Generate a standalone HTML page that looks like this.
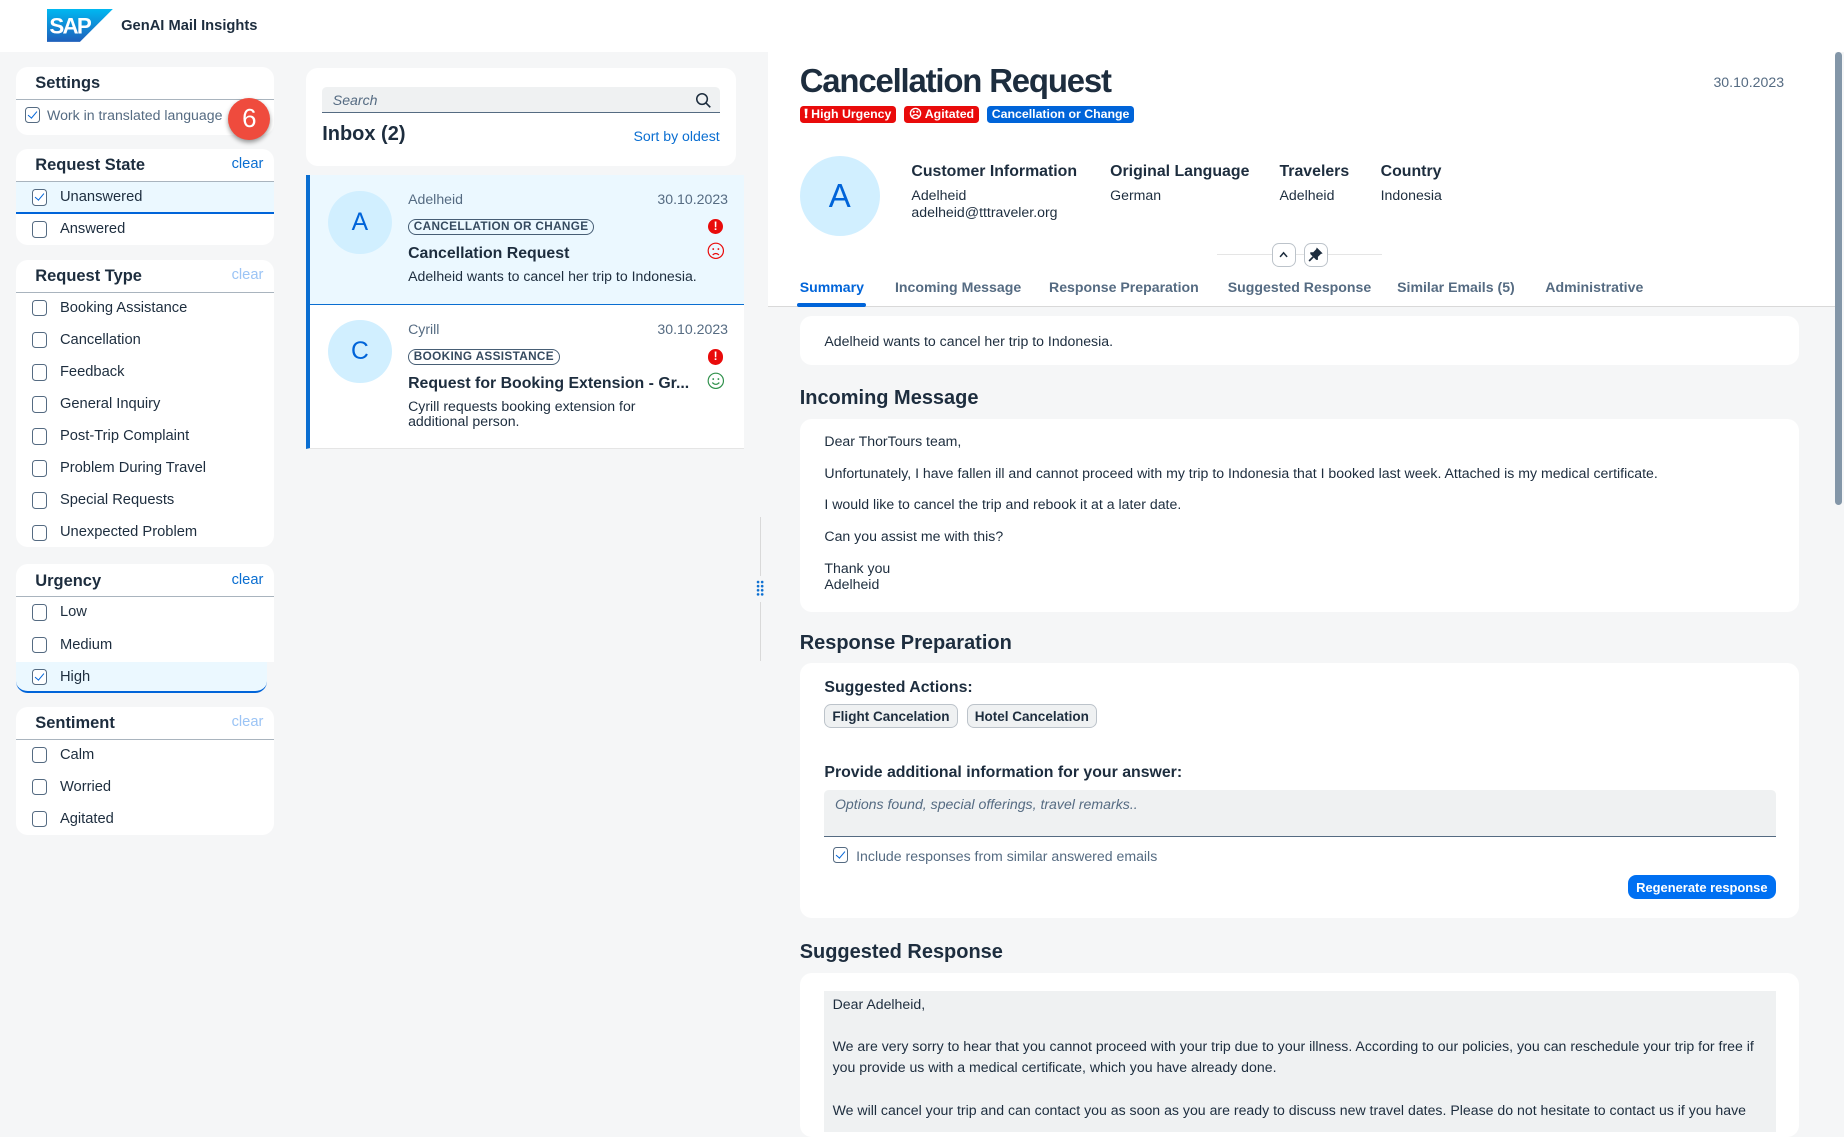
<!DOCTYPE html>
<html><head><meta charset="utf-8">
<style>
html{zoom:1.17602}
*{box-sizing:border-box;margin:0;padding:0}
body{width:1568px;height:955px;overflow:hidden;background:#f5f6f7;font-family:"Liberation Sans",sans-serif;color:#1d2d3e;font-size:12.5px;position:relative}
.a{position:absolute}
.panel{position:absolute;background:#fff;border-radius:10px;overflow:hidden}
.ph{height:28px;border-bottom:1px solid #a9b4be;position:relative}
.ph b{position:absolute;left:16px;top:6px;font-size:14px}
.ph i{position:absolute;right:9px;top:6px;font-style:normal;color:#0a6ed1;font-size:12.5px}
.ph i.d{color:#9bc4f5}
.row{height:27.3px;position:relative;line-height:27px;padding-left:37px}
.cb{position:absolute;left:13px;top:6px;width:13px;height:14px;border:1px solid #556b82;border-radius:3px;background:#fff}
.cb.on::after{content:"";position:absolute;left:3.5px;top:1px;width:3px;height:7px;border:solid #0064d9;border-width:0 1.3px 1.3px 0;transform:rotate(40deg)}
.sel{background:#ebf8ff;border-bottom:2px solid #0064d9}
.tag{display:inline-block;border:1px solid #475e75;border-radius:8px;font-size:10px;font-weight:bold;padding:0 4px;line-height:12px;color:#354a5f;letter-spacing:.3px}
.card{position:absolute;left:680px;width:850px;background:#fff;border-radius:10px}
.h2{position:absolute;left:680px;font-size:17px;font-weight:bold}
.tab{position:absolute;top:237px;font-weight:bold;color:#556b82;font-size:12px}
</style></head><body>
<div class="a" style="left:0;top:0;width:1568px;height:44px;background:#fff"></div>
<svg class="a" style="left:40px;top:8px" width="56" height="28" viewBox="0 0 56 28"><defs><linearGradient id="g" x1="0" y1="0" x2="0" y2="1"><stop offset="0" stop-color="#00b8f1"/><stop offset="1" stop-color="#1e5fbb"/></linearGradient></defs><polygon points="0,0 56,0 28,28 0,28" fill="url(#g)"/><text x="2" y="21" font-family="Liberation Sans" font-weight="bold" font-size="19" fill="#fff" letter-spacing="-1.5">SAP</text></svg>
<div class="a" style="left:103px;top:15px;font-weight:bold;font-size:12.5px">GenAI Mail Insights</div>

<div class="panel" style="left:14px;top:57px;width:219px;height:58px"><div class="ph"><b>Settings</b></div>
<div class="row" style="padding-left:26px;color:#556b82;font-size:12px"><span class="cb on" style="left:7px"></span>Work in translated language</div></div>
<div class="a" style="left:194px;top:83px;width:36px;height:36px;border-radius:50%;background:#ef4b3d;color:#fff;font-size:22px;text-align:center;line-height:36px;box-shadow:0 2px 4px rgba(0,0,0,.4)">6</div>

<div class="panel" style="left:14px;top:127px;width:219px;height:81px"><div class="ph"><b>Request State</b><i>clear</i></div>
<div class="row sel"><span class="cb on"></span>Unanswered</div><div class="row"><span class="cb"></span>Answered</div></div>

<div class="panel" style="left:14px;top:221px;width:219px;height:244px"><div class="ph"><b>Request Type</b><i class="d">clear</i></div>
<div class="row"><span class="cb"></span>Booking Assistance</div><div class="row"><span class="cb"></span>Cancellation</div><div class="row"><span class="cb"></span>Feedback</div><div class="row"><span class="cb"></span>General Inquiry</div><div class="row"><span class="cb"></span>Post-Trip Complaint</div><div class="row"><span class="cb"></span>Problem During Travel</div><div class="row"><span class="cb"></span>Special Requests</div><div class="row"><span class="cb"></span>Unexpected Problem</div></div>

<div class="panel" style="left:14px;top:480px;width:219px;height:110px;background:transparent"><div style="background:#fff"><div class="ph"><b>Urgency</b><i>clear</i></div>
<div class="row"><span class="cb"></span>Low</div><div class="row"><span class="cb"></span>Medium</div></div><div class="row sel" style="height:27px;margin-right:6px;border-radius:0 0 10px 10px"><span class="cb on"></span>High</div></div>

<div class="panel" style="left:14px;top:601px;width:219px;height:109px"><div class="ph"><b>Sentiment</b><i class="d">clear</i></div>
<div class="row"><span class="cb"></span>Calm</div><div class="row"><span class="cb"></span>Worried</div><div class="row"><span class="cb"></span>Agitated</div></div>

<div class="panel" style="left:260px;top:58px;width:366px;height:83px">
<div class="a" style="left:14px;top:16px;width:338px;height:22px;background:#eff1f2;border-bottom:1px solid #556b82;border-radius:4px 4px 0 0;font-style:italic;color:#556b82;padding:4px 9px;font-size:12px">Search</div>
<svg class="a" style="left:331px;top:20px" width="14" height="14" viewBox="0 0 14 14"><circle cx="6" cy="6" r="4.5" fill="none" stroke="#1d2d3e" stroke-width="1.3"/><path d="M9.3 9.3L13 13" stroke="#1d2d3e" stroke-width="1.4"/></svg>
<div class="a" style="left:14px;top:47px;font-size:17px;font-weight:bold">Inbox (2)</div>
<div class="a" style="right:14px;top:51px;color:#0a6ed1;font-size:12px">Sort by oldest</div></div>

<div class="a" style="left:260px;top:149px;width:373px;height:110px;background:#ebf8ff;border-left:4px solid #0a6ed1;border-bottom:1px solid #0a6ed1"></div>
<div class="a" style="left:260px;top:259px;width:373px;height:123px;background:#fff;border-left:4px solid #0a6ed1;border-bottom:1px solid #e5e5e5"></div>
<div class="a" style="left:279px;top:162px;width:54px;height:54px;border-radius:50%;background:#d1efff;color:#0064d9;font-size:21px;text-align:center;line-height:54px">A</div>
<div class="a" style="left:347px;top:162px;color:#556b82;font-size:12px">Adelheid</div>
<div class="a" style="left:559px;top:162px;color:#556b82;font-size:12px">30.10.2023</div>
<div class="a" style="left:347px;top:185px"><span class="tag">CANCELLATION OR CHANGE</span></div>
<div class="a" style="left:602px;top:186px;width:13px;height:13px;border-radius:50%;background:#e90b0b;color:#fff;font-size:10px;font-weight:bold;text-align:center;line-height:13px">!</div>
<svg class="a" style="left:601px;top:206px" width="15" height="15" viewBox="0 0 15 15"><circle cx="7.5" cy="7.5" r="6.5" fill="none" stroke="#e90b0b"/><circle cx="5.3" cy="6" r=".8" fill="#e90b0b"/><circle cx="9.7" cy="6" r=".8" fill="#e90b0b"/><path d="M4.8 11Q7.5 8.5 10.2 11" fill="none" stroke="#e90b0b"/></svg>
<div class="a" style="left:347px;top:208px;font-weight:bold;font-size:13.5px">Cancellation Request</div>
<div class="a" style="left:347px;top:228px;font-size:12px">Adelheid wants to cancel her trip to Indonesia.</div>

<div class="a" style="left:279px;top:272px;width:54px;height:54px;border-radius:50%;background:#d1efff;color:#0064d9;font-size:21px;text-align:center;line-height:54px">C</div>
<div class="a" style="left:347px;top:273px;color:#556b82;font-size:12px">Cyrill</div>
<div class="a" style="left:559px;top:273px;color:#556b82;font-size:12px">30.10.2023</div>
<div class="a" style="left:347px;top:296px"><span class="tag">BOOKING ASSISTANCE</span></div>
<div class="a" style="left:602px;top:297px;width:13px;height:13px;border-radius:50%;background:#e90b0b;color:#fff;font-size:10px;font-weight:bold;text-align:center;line-height:13px">!</div>
<svg class="a" style="left:601px;top:316px" width="15" height="15" viewBox="0 0 15 15"><circle cx="7.5" cy="7.5" r="6.5" fill="none" stroke="#30914c"/><circle cx="5.3" cy="6" r=".8" fill="#30914c"/><circle cx="9.7" cy="6" r=".8" fill="#30914c"/><path d="M4.5 9Q7.5 12 10.5 9" fill="none" stroke="#30914c"/></svg>
<div class="a" style="left:347px;top:319px;font-weight:bold;font-size:13.5px">Request for Booking Extension - Gr...</div>
<div class="a" style="left:347px;top:339px;font-size:12px;line-height:13px">Cyrill requests booking extension for<br>additional person.</div>

<div class="a" style="left:646px;top:440px;width:1px;height:50px;background:#d9d9d9"></div>
<div class="a" style="left:646px;top:512px;width:1px;height:50px;background:#d9d9d9"></div>
<div class="a" style="left:643px;top:493px;width:7px;height:14px;background:radial-gradient(circle,#0a6ed1 1px,transparent 1.3px) 0 0/3.5px 3.5px"></div>

<div class="a" style="left:653px;top:44px;width:907px;height:217px;background:#fff;border-bottom:1px solid #d9d9d9"></div>
<div class="a" style="left:680px;top:53px;font-size:28px;font-weight:bold;letter-spacing:-1px">Cancellation Request</div>
<div class="a" style="left:1457px;top:63px;color:#556b82;font-size:12px">30.10.2023</div>
<div class="a" style="left:680px;top:90px;display:flex;gap:7px;font-size:10.5px;font-weight:bold;color:#fff">
<span style="background:#e90b0b;border-radius:3px;padding:1px 4px">&#10071;&#xFE0E; High Urgency</span>
<span style="background:#e90b0b;border-radius:3px;padding:1px 4px">&#9785; Agitated</span>
<span style="background:#0064d9;border-radius:3px;padding:1px 4px">Cancellation or Change</span></div>
<div class="a" style="left:680px;top:133px;width:68px;height:68px;border-radius:50%;background:#d1efff;color:#0064d9;font-size:28px;text-align:center;line-height:68px">A</div>
<div class="a" style="left:775px;top:139px;line-height:15px"><b style="font-size:13.5px">Customer Information</b><div style="margin-top:4px;font-size:12px">Adelheid<br>adelheid@tttraveler.org</div></div>
<div class="a" style="left:944px;top:139px;line-height:15px"><b style="font-size:13.5px">Original Language</b><div style="margin-top:4px;font-size:12px">German</div></div>
<div class="a" style="left:1088px;top:139px;line-height:15px"><b style="font-size:13.5px">Travelers</b><div style="margin-top:4px;font-size:12px">Adelheid</div></div>
<div class="a" style="left:1174px;top:139px;line-height:15px"><b style="font-size:13.5px">Country</b><div style="margin-top:4px;font-size:12px">Indonesia</div></div>
<div class="a" style="left:1035px;top:216px;width:140px;height:1px;background:#e5e5e5"></div>
<div class="a" style="left:1082px;top:207px;width:20px;height:20px;border-radius:6px;background:#fff;border:1px solid #bcc3ca"><svg width="18" height="18" viewBox="0 0 18 18"><path d="M6 11L9 7.5L12 11" fill="none" stroke="#1d2d3e" stroke-width="1.3"/></svg></div>
<div class="a" style="left:1109px;top:207px;width:20px;height:20px;border-radius:6px;background:#fff;border:1px solid #bcc3ca"><svg width="18" height="18" viewBox="0 0 18 18"><path d="M10 3L15 8L13.5 8.5L11 11L11 13.5L9.5 13.5L4.5 8.5L4.5 7L7 7L9.5 4.5Z" fill="#1d2d3e"/><path d="M7 11L3.5 14.5" stroke="#1d2d3e" stroke-width="1.5"/></svg></div>
<div class="tab" style="left:680px;color:#0064d9">Summary</div>
<div class="a" style="left:678px;top:258px;width:58px;height:3px;background:#0064d9;border-radius:2px"></div>
<div class="tab" style="left:761px">Incoming Message</div>
<div class="tab" style="left:892px">Response Preparation</div>
<div class="tab" style="left:1044px">Suggested Response</div>
<div class="tab" style="left:1188px">Similar Emails (5)</div>
<div class="tab" style="left:1314px">Administrative</div>

<div class="card" style="top:269px;height:41px;padding:14px 21px;font-size:12px">Adelheid wants to cancel her trip to Indonesia.</div>
<div class="h2" style="top:329px">Incoming Message</div>
<div class="card" style="top:356px;height:164px;padding:13px 21px;font-size:12px;line-height:13.5px">Dear ThorTours team,<br><br>Unfortunately, I have fallen ill and cannot proceed with my trip to Indonesia that I booked last week. Attached is my medical certificate.<br><br>I would like to cancel the trip and rebook it at a later date.<br><br>Can you assist me with this?<br><br>Thank you<br>Adelheid</div>
<div class="h2" style="top:537px">Response Preparation</div>
<div class="card" style="top:564px;height:217px">
<div class="a" style="left:21px;top:13px;font-weight:bold;font-size:13.5px">Suggested Actions:</div>
<div class="a" style="left:21px;top:35px;border:1px solid #bcc3ca;background:#eff1f2;border-radius:6px;padding:3px 6px;font-size:11.5px;font-weight:bold;color:#1d2d3e">Flight Cancelation</div>
<div class="a" style="left:142px;top:35px;border:1px solid #bcc3ca;background:#eff1f2;border-radius:6px;padding:3px 6px;font-size:11.5px;font-weight:bold;color:#1d2d3e">Hotel Cancelation</div>
<div class="a" style="left:21px;top:86px;font-weight:bold;font-size:13.5px">Provide additional information for your answer:</div>
<div class="a" style="left:21px;top:108px;width:809px;height:40px;background:#eff1f2;border-bottom:1px solid #556b82;border-radius:4px 4px 0 0;padding:5px 9px;font-style:italic;color:#556b82;font-size:12px">Options found, special offerings, travel remarks..</div>
<span class="cb on" style="left:28px;top:156px"></span>
<div class="a" style="left:48px;top:157px;font-size:12px;color:#556b82">Include responses from similar answered emails</div>
<div class="a" style="right:20px;top:180px;background:#0070f2;color:#fff;border-radius:7px;padding:4px 7px;font-size:11px;font-weight:bold">Regenerate response</div></div>
<div class="h2" style="top:800px">Suggested Response</div>
<div class="card" style="top:827px;height:140px">
<div class="a" style="left:21px;top:16px;width:809px;height:120px;background:#eff1f2;padding:2px 7px;font-size:12px;line-height:18px">Dear Adelheid,<br><br>We are very sorry to hear that you cannot proceed with your trip due to your illness. According to our policies, you can reschedule your trip for free if you provide us with a medical certificate, which you have already done.<br><br>We will cancel your trip and can contact you as soon as you are ready to discuss new travel dates. Please do not hesitate to contact us if you have</div></div>
<div class="a" style="left:1560px;top:44px;width:6px;height:385px;background:#8396a8;border-radius:3px"></div>
</body></html>
